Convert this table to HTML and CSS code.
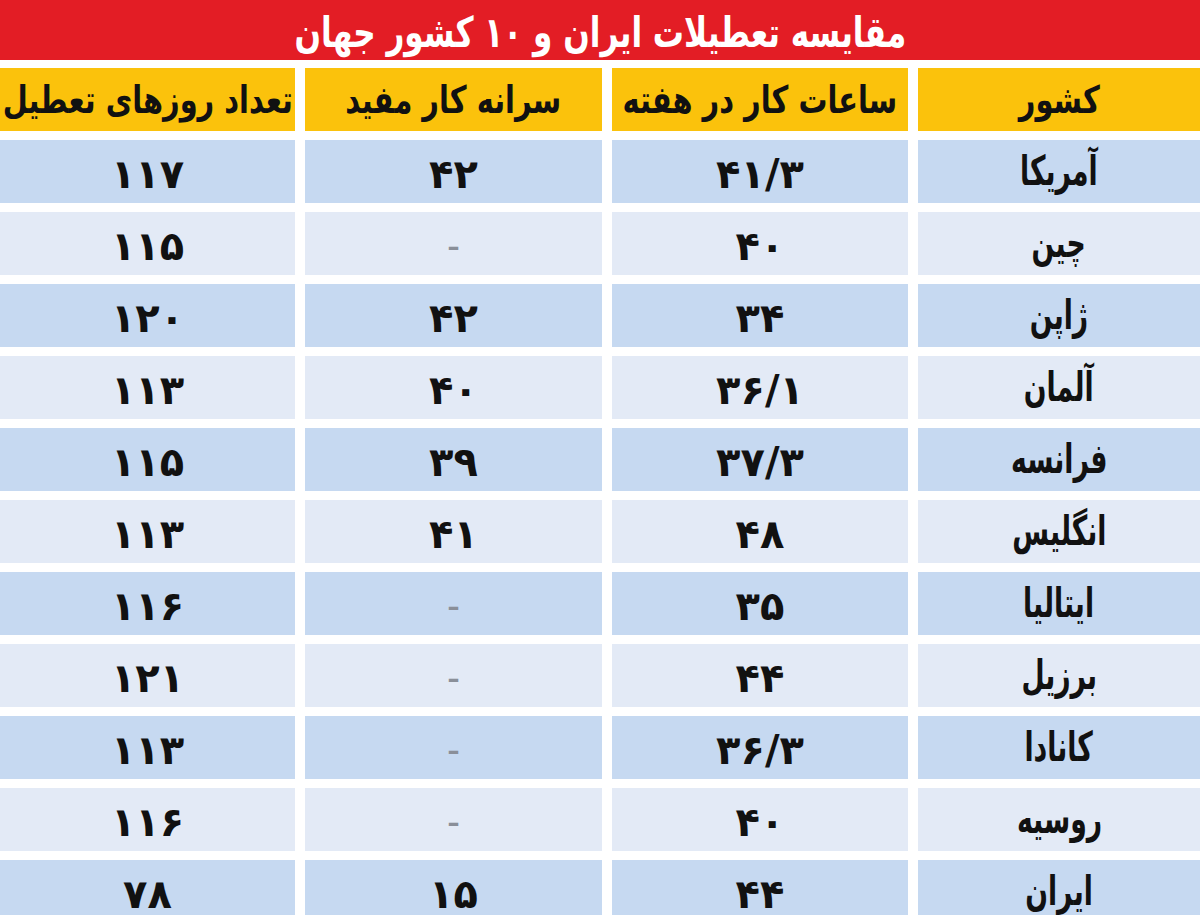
FILE: index.html
```html
<!DOCTYPE html>
<html lang="fa" dir="rtl">
<head>
<meta charset="utf-8">
<title>مقایسه تعطیلات ایران و ۱۰ کشور جهان</title>
<link rel="stylesheet" href="styles.css">
</head>
<body>
<div class="page">
  <div class="title"><span class="t">مقایسه تعطیلات ایران و ۱۰ کشور جهان</span></div>
  <div class="table">
    <div class="cell head"><span class="t">کشور</span></div>
    <div class="cell head"><span class="t">ساعات کار در هفته</span></div>
    <div class="cell head"><span class="t">سرانه کار مفید</span></div>
    <div class="cell head"><span class="t">تعداد روزهای تعطیل</span></div>

    <div class="cell b"><span class="name">آمریکا</span></div>
    <div class="cell b"><span class="num">۴۱/۳</span></div>
    <div class="cell b"><span class="num">۴۲</span></div>
    <div class="cell b"><span class="num">۱۱۷</span></div>

    <div class="cell l"><span class="name">چین</span></div>
    <div class="cell l"><span class="num">۴۰</span></div>
    <div class="cell l"><span class="dash">–</span></div>
    <div class="cell l"><span class="num">۱۱۵</span></div>

    <div class="cell b"><span class="name">ژاپن</span></div>
    <div class="cell b"><span class="num">۳۴</span></div>
    <div class="cell b"><span class="num">۴۲</span></div>
    <div class="cell b"><span class="num">۱۲۰</span></div>

    <div class="cell l"><span class="name">آلمان</span></div>
    <div class="cell l"><span class="num">۳۶/۱</span></div>
    <div class="cell l"><span class="num">۴۰</span></div>
    <div class="cell l"><span class="num">۱۱۳</span></div>

    <div class="cell b"><span class="name">فرانسه</span></div>
    <div class="cell b"><span class="num">۳۷/۳</span></div>
    <div class="cell b"><span class="num">۳۹</span></div>
    <div class="cell b"><span class="num">۱۱۵</span></div>

    <div class="cell l"><span class="name">انگلیس</span></div>
    <div class="cell l"><span class="num">۴۸</span></div>
    <div class="cell l"><span class="num">۴۱</span></div>
    <div class="cell l"><span class="num">۱۱۳</span></div>

    <div class="cell b"><span class="name">ایتالیا</span></div>
    <div class="cell b"><span class="num">۳۵</span></div>
    <div class="cell b"><span class="dash">–</span></div>
    <div class="cell b"><span class="num">۱۱۶</span></div>

    <div class="cell l"><span class="name">برزیل</span></div>
    <div class="cell l"><span class="num">۴۴</span></div>
    <div class="cell l"><span class="dash">–</span></div>
    <div class="cell l"><span class="num">۱۲۱</span></div>

    <div class="cell b"><span class="name">کانادا</span></div>
    <div class="cell b"><span class="num">۳۶/۳</span></div>
    <div class="cell b"><span class="dash">–</span></div>
    <div class="cell b"><span class="num">۱۱۳</span></div>

    <div class="cell l"><span class="name">روسیه</span></div>
    <div class="cell l"><span class="num">۴۰</span></div>
    <div class="cell l"><span class="dash">–</span></div>
    <div class="cell l"><span class="num">۱۱۶</span></div>

    <div class="cell b"><span class="name">ایران</span></div>
    <div class="cell b"><span class="num">۴۴</span></div>
    <div class="cell b"><span class="num">۱۵</span></div>
    <div class="cell b"><span class="num">۷۸</span></div>
  </div>
</div>
</body>
</html>
```

FILE: styles.css
```css
html, body {
  margin: 0;
  padding: 0;
  background: #ffffff;
}

body {
  font-family: "DejaVu Sans", sans-serif;
  font-weight: bold;
  color: #111111;
  width: 1200px;
  height: 915px;
  overflow: hidden;
}

.page {
  direction: rtl;
  width: 1200px;
}

.title {
  height: 60px;
  background: #e31d25;
  color: #ffffff;
  display: flex;
  justify-content: center;
  align-items: flex-end;
  font-size: 42px;
  line-height: 1;
  box-sizing: border-box;
  padding-bottom: 6px;
  overflow: hidden;
}

.title .t {
  transform: scaleX(0.74);
}

.table {
  margin-top: 8px;
  display: grid;
  grid-template-columns: 282px 296px 297px 295px;
  grid-auto-rows: 63px;
  column-gap: 10px;
  row-gap: 9px;
}

.cell {
  display: flex;
  align-items: center;
  justify-content: center;
  line-height: 1;
  overflow: hidden;
}

.t,
.name,
.num,
.dash {
  display: inline-block;
  white-space: nowrap;
}

.head {
  background: #fbc20c;
  font-size: 38px;
}

.head .t {
  transform: scaleX(0.76);
}

.name {
  font-size: 41px;
  transform: scaleX(0.65);
}

.num {
  font-size: 40px;
  padding-top: 4px;
}

.b {
  background: #c6d9f1;
}

.l {
  background: #e3eaf6;
}

.dash {
  color: #8a8f99;
  font-size: 24px;
  padding-top: 6px;
}
```
